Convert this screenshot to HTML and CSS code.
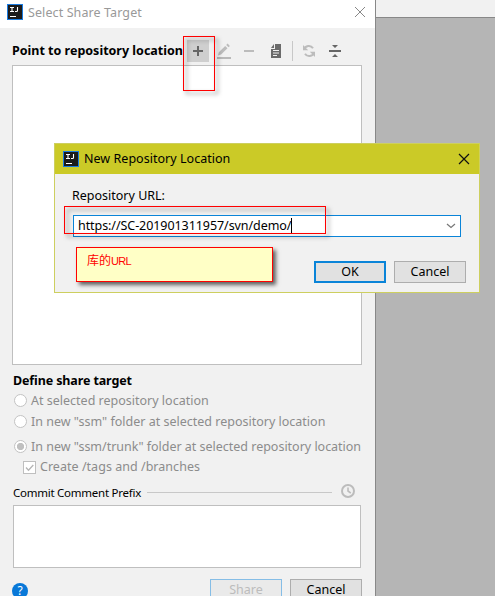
FILE: index.html
```html
<!DOCTYPE html>
<html lang="en">
<head>
<meta charset="utf-8">
<title>Select Share Target</title>
<link rel="stylesheet" href="styles.css">
</head>
<body>
<div class="desktop">
  <section class="window">
    <header class="titlebar">
      <svg class="logo" width="16" height="16" viewBox="0 0 16 16"><rect width="16" height="16" fill="#1a7be0"/><rect x="1" y="1" width="14" height="14" fill="#1b1b1b"/><path d="M3 3.5h4M5 3.5v4M3 7.5h4M10.5 3v3.4q0 1.1-1 1.1H8M3 12.5h6" fill="none" stroke="#fff" stroke-width="1.1"/></svg>
      <h1 class="title">Select Share Target</h1>
      <svg class="close" width="12" height="12" viewBox="0 0 12 12"><path d="M1 1l10 10M11 1L1 11" stroke="#888" fill="none"/></svg>
    </header>
    <div class="toolbar">
      <h2 class="heading point">Point to repository location</h2>
      <button class="tool add"><svg width="22" height="22"><path d="M11 6v10M6 11h10" stroke="#666" stroke-width="2"/></svg></button>
      <svg class="tool" width="22" height="22"><path d="M4 18h14" stroke="#b9b9b9" stroke-width="2"/><path d="M5 15.5l.8-3.2 6.4-6.4 2.3 2.3-6.4 6.4zM13.2 5l1.4-1.4 2.3 2.3-1.4 1.4z" fill="#bcbcbc"/></svg>
      <svg class="tool" width="22" height="22"><path d="M5 11h10" stroke="#bcbcbc" stroke-width="2"/></svg>
      <svg class="tool" width="22" height="22"><path d="M10 4h6v14H6V9h4z" fill="#6b6b6b"/><path d="M9 4v4H6z" fill="#6b6b6b"/><path d="M8 10.5h6M8 13h6M8 15.5h4" stroke="#f1f1f1"/></svg>
      <i class="separator"></i>
      <svg class="tool" width="22" height="22"><path d="M6 9.5A5 5 0 0 1 15 8.2M16 12.5A5 5 0 0 1 7 13.8" fill="none" stroke="#bcbcbc" stroke-width="2"/><path d="M5 5v5.2h5.2zM17 17v-5.2h-5.2z" fill="#bcbcbc"/></svg>
      <svg class="tool" width="22" height="22"><path d="M5 11h12" stroke="#666" stroke-width="2"/><path d="M8 5h6l-3 3zM8 17h6l-3-3z" fill="#666"/></svg>
    </div>
    <div class="locations"></div>
    <h2 class="heading define">Define share target</h2>
    <div class="option"><i class="radio"></i><span>At selected repository location</span></div>
    <div class="option"><i class="radio"></i><span>In new "ssm" folder at selected repository location</span></div>
    <div class="option last"><i class="radio on"></i><span>In new "ssm/trunk" folder at selected repository location</span></div>
    <div class="option child"><svg class="check" width="13" height="13"><rect x=".5" y=".5" width="12" height="12" fill="#fff" stroke="#bfbfbf"/><path d="M3 6.5l2.5 2.7L10.3 4" fill="none" stroke="#b5b5b5" stroke-width="1.3"/></svg><span>Create /tags and /branches</span></div>
    <div class="prefix"><span class="prefix-label">Commit Comment Prefix</span><i class="rule"></i><svg class="clock" width="16" height="16"><circle cx="8" cy="8" r="6" fill="none" stroke="#bcbcbc" stroke-width="2"/><path d="M8 4.5V8l2.8 2.2" fill="none" stroke="#bcbcbc" stroke-width="1.6"/></svg></div>
    <div class="comment"></div>
    <footer class="footer"><span class="help">?</span><button class="button share">Share</button><button class="button">Cancel</button></footer>
  </section>
  <aside class="backdrop"><div class="strip"></div></aside>
</div>

<section class="dialog">
  <header class="dialog-title">
    <svg class="logo" width="16" height="16" viewBox="0 0 16 16"><rect width="16" height="16" fill="#1a7be0"/><rect x="1" y="1" width="14" height="14" fill="#1b1b1b"/><path d="M3 3.5h4M5 3.5v4M3 7.5h4M10.5 3v3.4q0 1.1-1 1.1H8M3 12.5h6" fill="none" stroke="#fff" stroke-width="1.1"/></svg>
    <h1 class="title">New Repository Location</h1>
    <svg class="close" width="12" height="12" viewBox="0 0 12 12"><path d="M1 1l10 10M11 1L1 11" stroke="#111" stroke-width="1.2" fill="none"/></svg>
  </header>
  <div class="dialog-body">
    <div class="label">Repository URL:</div>
    <div class="combo"><span class="url">https://SC-201901311957/svn/demo/</span><i class="caret"></i><svg class="arrow" width="10" height="6"><path d="M1 1l4 3.5L9 1" fill="none" stroke="#777" stroke-width="1.2"/></svg></div>
    <div class="actions"><button class="button ok">OK</button><button class="button">Cancel</button></div>
  </div>
</section>
<div class="mark mark-add"></div>
<div class="mark mark-url"></div>
<div class="note">库的<span class="latin">URL</span></div>
</body>
</html>
```

FILE: styles.css
```css
* { box-sizing: border-box; }
body { margin: 0; width: 495px; height: 596px; overflow: hidden; position: relative; font: 12.5px/18px "Noto Sans", "Noto Sans CJK SC", sans-serif; color: #000; }
h1, h2 { margin: 0; font-size: inherit; font-weight: 400; }
svg { display: block; flex: none; }
span, h1, h2, .label { white-space: nowrap; }
.desktop { display: flex; height: 596px; }
.window { width: 376px; flex: none; background: #f1f1f1; border-right: 1px solid #888; }
.backdrop { flex: 1; background: #b5b5b5; }
.strip { height: 18px; background: #f1f1f1; border-bottom: 1px solid #888; }
.titlebar { display: flex; align-items: center; height: 28px; padding: 0 9px 4px 7px; background: #fff; color: #999; }
.titlebar .logo { margin-top: -1px; margin-bottom: -1px; position: relative; }
.titlebar .title { padding-top: 2px; letter-spacing: .1px; }
.title { margin-left: 5px; flex: 1; }
.toolbar { display: flex; align-items: flex-start; height: 37px; padding: 12px 0 0 12px; }
.heading { font-weight: 700; }
.point { width: 175px; padding-top: 2px; }
.toolbar .tool { margin-right: 4px; }
.tool.add { width: 22px; height: 22px; padding: 0; border: 0; background: #cfcfcf; }
.separator { width: 1px; height: 20px; background: #c8c8c8; margin: 1px 5px 0 1px; }
.locations { margin-left: 12px; width: 350px; height: 300px; background: #fff; border: 1px solid #bfbfbf; }
.define { margin: 7px 0 0 13px; height: 18px; letter-spacing: -.12px; }
.option { display: flex; align-items: center; height: 21px; padding-left: 14px; gap: 4px; color: #8c8c8c; }
.option.last { margin-top: 4px; }
.option.last span { letter-spacing: -.015px; }
.option.child { height: 20px; padding-left: 23px; }
.option.child span { letter-spacing: .03px; }
.radio { width: 13px; height: 13px; flex: none; border: 1px solid #c3c3c3; border-radius: 50%; background: #fff; }
.radio.on { background: radial-gradient(circle, #c0c0c0 0 3.3px, #fff 4px); }
.prefix { display: flex; align-items: center; height: 28px; padding: 3px 19px 0 13px; font-size: 11.5px; }
.prefix-label { letter-spacing: -.25px; }
.rule { flex: 1; height: 1px; background: #c8c8c8; margin: 0 8px 0 6px; }
.clock { margin-top: -4px; }
.comment { width: 348px; height: 63px; margin-left: 13px; background: #fff; border: 1px solid #bfbfbf; }
.footer { display: flex; gap: 8px; padding: 11px 13px 0 12px; }
.help { width: 16px; height: 16px; margin: 4px auto 0 0; border-radius: 50%; background: #0878d8; color: #fff; font-size: 12px; line-height: 16px; text-align: center; }
.button { width: 72px; height: 22px; padding: 0; border: 1px solid #adadad; background: #e1e1e1; color: #000; font: inherit; line-height: 18px; }
.button.share { border-color: #85bde6; background: #eaeaea; color: #bcbcbc; }
.button.ok { border: 2px solid #0a84d8; }
.dialog { position: absolute; left: 54px; top: 143px; width: 426px; height: 150px; background: #f1f1f1; border: 1px solid #cdcf5f; }
.dialog-title { display: flex; align-items: center; height: 30px; padding: 0 9px 1px 8px; background: #cbca27; }
.dialog-title .title { padding-top: 1px; letter-spacing: .03px; }
.dialog-body { padding: 13px 13px 0 17px; }
.combo { display: flex; align-items: center; width: 388px; height: 22px; margin: 10px 0 0 1px; padding: 0 4px; background: #fff; border: 1px solid #0a84d8; }
.url { letter-spacing: -.07px; }
.caret { width: 1px; height: 16px; background: #000; }
.arrow { margin-left: auto; }
.actions { display: flex; justify-content: flex-end; gap: 8px; margin-top: 24px; }
.mark { position: absolute; border: 1px solid #f00; filter: drop-shadow(3px 3px 2px #0008); }
.mark-add { left: 183px; top: 36px; width: 32px; height: 55px; }
.mark-url { left: 64px; top: 206px; width: 262px; height: 28px; }
.note { position: absolute; left: 76px; top: 247px; width: 197px; height: 35px; padding: 4px 10px; background: #ffffc6; border: 1px solid #f00; box-shadow: 3px 3px 4px #0009; color: #f00; font: 12px/18px "Liberation Sans", "Noto Sans CJK SC", sans-serif; }
.latin { font-size: 11px; letter-spacing: -.7px; }
```
